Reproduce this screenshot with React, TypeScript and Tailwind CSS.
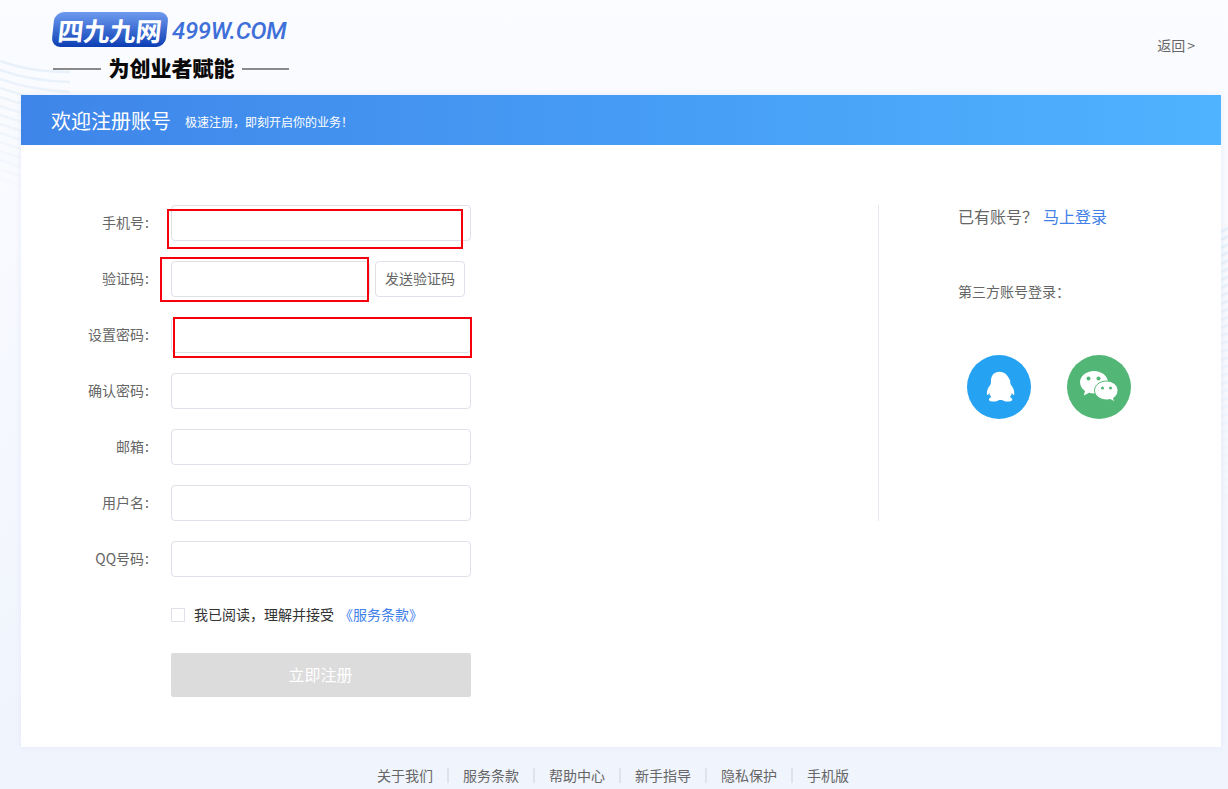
const fields = [
  { name: "手机号", mark: "left-[-4px] top-[4px] h-[40px] w-[296px]" },
  { name: "验证码", short: true, mark: "left-[-11px] top-[-4px] h-[45px] w-[209px]" },
  { name: "设置密码", mark: "left-[2px] top-[0px] h-[41px] w-[299px]" },
  { name: "确认密码" },
  { name: "邮箱" },
  { name: "用户名" },
  { name: "QQ号码" },
];

const footerLinks = ["关于我们", "服务条款", "帮助中心", "新手指导", "隐私保护", "手机版"];

function Waves() {
  const left = [0, 1, 2, 3, 4, 5, 6, 7, 8, 9, 10, 11, 12, 13];
  const right = Array.from({ length: 34 }, (_, i) => i);
  return (
    <svg className="absolute left-0 top-0 h-[789px] w-[1228px]" viewBox="0 0 1228 789" fill="none">
      {left.map((i) => (
        <path
          key={i}
          d={`M0 ${61 + i * 9} Q 30 ${72 + i * 9}, 70 ${72 + i * 10}`}
          stroke="#dceaf7"
          strokeOpacity={0.6 - i * 0.04}
          strokeWidth="2.5"
        />
      ))}
      {right.map((i) => (
        <path
          key={i}
          d={`M1221 ${232 + i * 8} L1228 ${228 + i * 8.1}`}
          stroke="#d7e9f8"
          strokeOpacity={Math.max(0.1, 0.6 - i * 0.018)}
          strokeWidth="3"
        />
      ))}
    </svg>
  );
}

function QQIcon() {
  return (
    <svg width="35" height="35" viewBox="0 0 32 32" fill="#fff">
      <path d="M16 1.500c-5 0-7.800 3.600-7.800 8.200 0 1.200.1 2-.3 3-.3.900-1 1.700-1.600 2.700-1.200 2-2 4.300-1.800 6.600.1.900.5 1.200 1 .7.400-.4.900-1 1.200-1.600.2 1.500.9 2.800 1.900 3.800-1 .4-2.300 1-2.300 2 0 1.300 2.200 2 4.600 2 2.200 0 4-.6 4.700-1.400h2.800c.7.800 2.500 1.400 4.700 1.400 2.400 0 4.600-.7 4.600-2 0-1-1.300-1.600-2.300-2 1-1 1.700-2.300 1.900-3.800.3.600.8 1.200 1.200 1.600.5.500.9.200 1-.7.2-2.300-.6-4.600-1.800-6.600-.6-1-1.300-1.800-1.600-2.700-.4-1-.3-1.800-.3-3C23.800 5.100 21 1.500 16 1.500z" />
    </svg>
  );
}

function WechatIcon() {
  return (
    <svg width="40" height="34" viewBox="0 0 40 34">
      <path d="M15 1C7.300 1 1 6 1 12.300c0 3.500 2 6.600 5 8.700L4.800 25.500l5.400-2.800c1.500.4 3.100.7 4.800.7 7.700 0 14-5 14-11.100S22.700 1 15 1z" fill="#fff" />
      <circle cx="9.500" cy="8.500" r="2" fill="#52b776" />
      <circle cx="19.500" cy="8.500" r="2" fill="#52b776" />
      <path d="M27.500 11C20.800 11 15.500 15.400 15.500 20.500S20.800 30 27.500 30c1.300 0 2.600-.2 3.800-.5l4.300 2.400-1-3.800c2.600-1.700 4.400-4.500 4.400-7.600C39 15.400 34.200 11 27.500 11z" fill="#fff" stroke="#52b776" strokeWidth="1" />
      <circle cx="23.500" cy="18" r="1.500" fill="#52b776" />
      <circle cx="31.500" cy="18" r="1.500" fill="#52b776" />
    </svg>
  );
}

export default function App() {
  return (
    <div className="relative min-h-screen overflow-hidden bg-gradient-to-b from-[#fbfcff] to-[#f0f4fd] font-['Noto_Sans_CJK_SC',sans-serif] text-[14px] text-[#666]">
      <Waves />

      <header className="relative flex h-[95px] items-start justify-between pl-[53px] pr-[33px]">
        <div className="flex w-[236px] flex-col pt-[12px]">
          <div className="flex h-[35px] items-center">
            <div className="flex h-[35px] w-[114px] shrink-0 -skew-x-6 items-center justify-center rounded-[9px] bg-gradient-to-b from-[#6f9bef] to-[#0b3db4]">
              <span className="text-[26px] font-bold leading-none text-white">四九九网</span>
            </div>
            <span className="ml-[5px] mt-[2px] font-['Roboto',sans-serif] text-[24px] font-medium italic leading-none tracking-[-0.3px] text-[#3f6fd8]">
              499W.COM
            </span>
          </div>
          <div className="mt-[9px] flex h-[26px] items-center justify-between">
            <span className="h-[2px] w-[48px] bg-[#8a8a8a]" />
            <span className="mb-[4px] text-[21px] font-black leading-none text-[#0a0a0a]">为创业者赋能</span>
            <span className="h-[2px] w-[47px] bg-[#8a8a8a]" />
          </div>
        </div>
        <a className="mt-[35px] leading-[20px]">
          返回<span className="ml-[2px]">&gt;</span>
        </a>
      </header>

      <main className="relative mx-[21px] w-[1200px] bg-white shadow-[0_0_6px_rgba(200,210,235,0.35)]">
        <div className="flex h-[50px] items-center bg-gradient-to-r from-[#3f85e9] to-[#4fb3ff] pl-[30px] text-white">
          <h1 className="mt-[2px] text-[20px] font-normal leading-none">欢迎注册账号</h1>
          <p className="ml-[14px] mt-[3px] text-[12px] leading-none">极速注册，即刻开启你的业务！</p>
        </div>

        <div className="flex h-[602px] pt-[60px]">
          <form className="w-[857px]">
            <div className="flex flex-col gap-[20px]">
              {fields.map((f) => (
                <div key={f.name} className="flex h-[36px] items-center">
                  <label className="w-[130px] pb-[2px] text-right leading-[34px]">
                    {f.name}
                    <span className="ml-[1px] mr-[2px]">:</span>
                  </label>
                  <div className="relative ml-[20px] flex">
                    <input
                      className={`h-[36px] rounded-[4px] border border-[#dfe1ea] bg-white ${f.short ? "w-[199px]" : "w-[300px]"}`}
                    />
                    {f.short && (
                      <button
                        type="button"
                        className="ml-[5px] h-[36px] w-[90px] rounded-[4px] border border-[#dfe1ea] bg-white pb-[1px] text-[14px] text-[#666]"
                      >
                        发送验证码
                      </button>
                    )}
                    {f.mark && <span className={`absolute border-2 border-[#f5000c] ${f.mark}`} />}
                  </div>
                </div>
              ))}
            </div>

            <div className="ml-[150px] mt-[31px] flex h-[14px] items-center">
              <span className="h-[14px] w-[14px] border border-[#dfe1ea]" />
              <span className="ml-[9px] mb-[1px] text-[#333]">我已阅读，理解并接受</span>
              <a className="ml-[5px] mb-[1px] text-[#4080e8]">《服务条款》</a>
            </div>

            <button
              type="button"
              className="ml-[150px] mt-[31px] h-[44px] w-[300px] rounded-[2px] bg-[#dcdcdc] pb-[2px] pr-[1px] text-[16px] text-white"
            >
              立即注册
            </button>
          </form>

          <aside className="h-[316px] flex-1 border-l border-[#e3e8f3] pl-[79px]">
            <p className="text-[16px] leading-[22px]">
              已有账号？<a className="ml-[5px] text-[#4080e8]">马上登录</a>
            </p>
            <p className="mt-[54px] leading-[20px]">第三方账号登录：</p>
            <div className="ml-[9px] mt-[54px] flex gap-[36px]">
              <a className="flex h-[64px] w-[64px] items-center justify-center rounded-full bg-[#25a2f1]">
                <QQIcon />
              </a>
              <a className="flex h-[64px] w-[64px] items-center justify-center rounded-full bg-[#52b776]">
                <WechatIcon />
              </a>
            </div>
          </aside>
        </div>
      </main>

      <footer className="relative flex h-[42px] items-center justify-center pr-[2px] pt-[15px]">
        {footerLinks.map((t, i) => (
          <a
            key={t}
            className={`h-[15px] px-[14px] leading-[15px] ${i < footerLinks.length - 1 ? "border-r-2 border-[#dfe3ec]" : ""}`}
          >
            {t}
          </a>
        ))}
      </footer>
    </div>
  );
}
